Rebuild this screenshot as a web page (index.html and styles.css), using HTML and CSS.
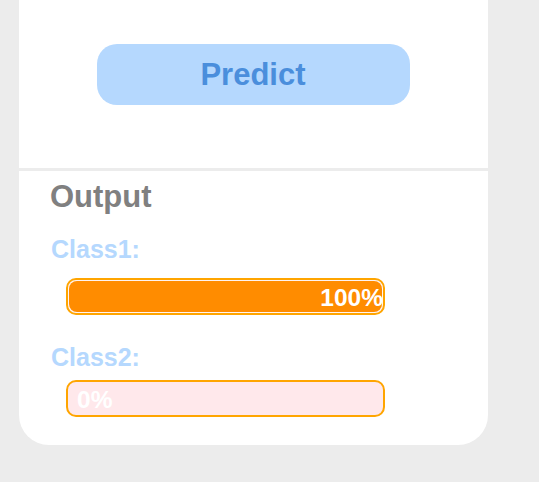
FILE: index.html
```html
<!DOCTYPE html>
<html>
<head>
<meta charset="utf-8">
<link rel="stylesheet" href="styles.css">
</head>
<body>
<div class="page">
  <section class="card card-top">
    <button class="predict">Predict</button>
  </section>
  <section class="card card-output">
    <h2 class="title">Output</h2>
    <div class="label label-first">Class1:</div>
    <div class="bar">
      <div class="fill" style="width: 100%"><span class="pct pct-end">100%</span></div>
    </div>
    <div class="label label-second">Class2:</div>
    <div class="bar bar-empty">
      <span class="pct pct-start">0%</span>
    </div>
  </section>
</div>
</body>
</html>
```

FILE: styles.css
```css
html, body {
  margin: 0;
  padding: 0;
  background: #ececec;
  font-family: "Liberation Sans", Arial, sans-serif;
}

.page {
  margin-left: 19px;
  width: 469px;
  display: flex;
  flex-direction: column;
  gap: 3px;
}

.card {
  background: #ffffff;
}

.card-top {
  height: 168px;
  box-sizing: border-box;
  padding-top: 44px;
  display: flex;
  justify-content: center;
  align-items: flex-start;
}

.predict {
  width: 313px;
  height: 61px;
  border: none;
  border-radius: 20px;
  background: #b5d8fe;
  color: #4a8edc;
  font-family: "Liberation Sans", Arial, sans-serif;
  font-weight: bold;
  font-size: 31px;
  padding: 0;
  margin-right: 1px;
}

.card-output {
  border-radius: 0 0 30px 30px;
  padding: 9px 0 28px 32px;
}

.title {
  margin: 0;
  font-size: 31px;
  line-height: 34px;
  color: #808080;
  font-weight: bold;
  margin-left: -1px;
}

.label {
  font-size: 25px;
  line-height: 28px;
  font-weight: bold;
  color: #b5d8fe;
}

.label-first {
  margin-top: 21px;
}

.label-second {
  margin-top: 28px;
}

.bar {
  width: 319px;
  height: 37px;
  box-sizing: border-box;
  margin-left: 15px;
  border: 2px solid #ffa500;
  border-radius: 10px;
  padding: 1px;
  background: #fff3f0;
  display: flex;
}

.label-first + .bar {
  margin-top: 15px;
}

.label-second + .bar {
  margin-top: 9px;
}

.bar-empty {
  background: #ffe8eb;
  align-items: center;
}

.fill {
  height: 100%;
  background: #ff8c00;
  border-radius: 8px;
  display: flex;
  align-items: center;
  justify-content: flex-end;
}

.pct {
  color: #ffffff;
  font-size: 24.5px;
  font-weight: bold;
  line-height: 28px;
  white-space: nowrap;
}

.pct-end {
  margin-right: -1px;
  padding-top: 2px;
}

.pct-start {
  padding-left: 8px;
  padding-top: 3px;
}
```
